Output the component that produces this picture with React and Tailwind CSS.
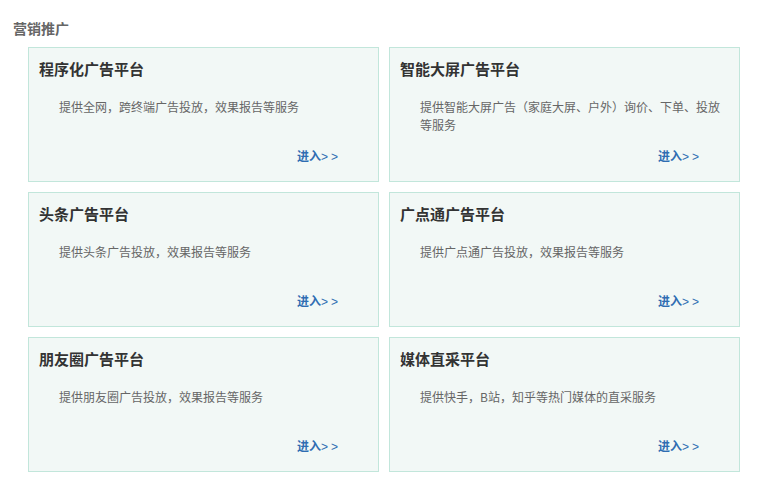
import React from "react";

const items = [
  { t: "程序化广告平台", d: "提供全网，跨终端广告投放，效果报告等服务" },
  { t: "智能大屏广告平台", d: "提供智能大屏广告（家庭大屏、户外）询价、下单、投放等服务" },
  { t: "头条广告平台", d: "提供头条广告投放，效果报告等服务" },
  { t: "广点通广告平台", d: "提供广点通广告投放，效果报告等服务" },
  { t: "朋友圈广告平台", d: "提供朋友圈广告投放，效果报告等服务" },
  { t: "媒体直采平台", d: "提供快手，B站，知乎等热门媒体的直采服务" },
];

export default function App() {
  return (
    <div
      className="w-[763px] h-[488px] bg-white"
      style={{ fontFamily: '"Microsoft YaHei", "Noto Sans CJK SC", "Noto Sans", sans-serif' }}
    >
      <div className="pl-[13px] pt-[19px] text-[14px] leading-[18px] font-bold text-[#666]">营销推广</div>
      <div className="ml-[28px] mt-[10px] grid grid-cols-[351px_351px] gap-[10px]">
        {items.map((it) => (
          <div
            key={it.t}
            className="h-[135px] border border-[#c2e6db] bg-[#f2f8f6] flex flex-col pt-[11px] pb-[15px]"
          >
            <div className="pl-[10px] text-[15px] leading-[20px] font-bold text-[#333]">{it.t}</div>
            <div className="pl-[30px] mt-[19px] w-[336px] text-[12px] leading-[18px] text-[#666]">{it.d}</div>
            <div className="mt-auto pl-[268px] text-[12px] leading-[18px] text-[#2f6db2]">
              <span className="font-bold">进入</span>
              <span className="tracking-[3px]" style={{ fontFamily: '"Liberation Sans", sans-serif' }}>&gt;&gt;</span>
            </div>
          </div>
        ))}
      </div>
    </div>
  );
}
